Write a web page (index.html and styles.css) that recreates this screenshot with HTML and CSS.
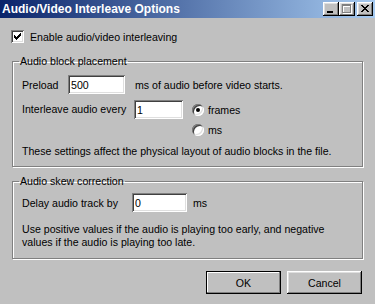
FILE: index.html
```html
<!DOCTYPE html>
<html lang="en">
<head>
    <meta charset="UTF-8">
    <title>Audio/Video Interleave Options</title>
    <link rel="stylesheet" href="styles.css">
</head>
<body>
    <div class="dialog">
        <div class="titlebar">
            <span class="title">Audio/Video Interleave Options</span>
            <div class="caption-buttons">
                <span class="cap-btn">
                    <svg width="16" height="14" viewBox="0 0 16 14" shape-rendering="crispEdges"><rect x="4" y="9" width="6" height="2" fill="#000"/></svg>
                </span>
                <span class="cap-btn">
                    <svg width="16" height="14" viewBox="0 0 16 14" shape-rendering="crispEdges">
                        <path d="M4 3h9v9H4z M5 5h7v6H5z" fill="#fff" fill-rule="evenodd"/>
                        <path d="M3 2h9v9H3z M4 4h7v6H4z" fill="#808080" fill-rule="evenodd"/>
                    </svg>
                </span>
                <span class="cap-btn cap-close">
                    <svg width="16" height="14" viewBox="0 0 16 14" shape-rendering="crispEdges">
                        <path transform="translate(4 3)" d="M0 0h2v1H0z M6 0h2v1H6z M1 1h2v1H1z M5 1h2v1H5z M2 2h4v1H2z M3 3h2v1H3z M2 4h4v1H2z M1 5h2v1H1z M5 5h2v1H5z M0 6h2v1H0z M6 6h2v1H6z" fill="#000"/>
                    </svg>
                </span>
            </div>
        </div>

        <div class="client">
            <label class="check-row">
                <span class="checkbox">
                    <svg width="7" height="7" viewBox="0 0 7 7" shape-rendering="crispEdges"><path d="M6 0h1v1H6z M5 1h2v1H5z M0 2h1v1H0z M4 2h3v1H4z M0 3h2v1H0z M3 3h3v1H3z M0 4h5v1H0z M1 5h3v1H1z M2 6h1v1H2z" fill="#000"/></svg>
                </span>
                Enable audio/video interleaving
            </label>

            <!-- 오디오 블록 배치 -->
            <fieldset class="group group-placement">
                <legend>Audio block placement</legend>
                <div class="row">
                    <span class="label label-preload">Preload</span>
                    <input class="edit edit-preload" type="text" value="500">
                    <span class="after-edit">ms of audio before video starts.</span>
                </div>
                <div class="row row-interleave">
                    <span class="label label-interleave">Interleave audio every</span>
                    <input class="edit edit-interleave" type="text" value="1">
                    <div class="radios">
                        <label class="radio-row"><span class="radio"><span class="dot"></span></span>frames</label>
                        <label class="radio-row"><span class="radio"></span>ms</label>
                    </div>
                </div>
                <p class="note">These settings affect the physical layout of audio blocks in the file.</p>
            </fieldset>

            <!-- 오디오 스큐 보정 -->
            <fieldset class="group group-skew">
                <legend>Audio skew correction</legend>
                <div class="row">
                    <span class="label label-delay">Delay audio track by</span>
                    <input class="edit edit-delay" type="text" value="0">
                    <span class="after-delay">ms</span>
                </div>
                <p class="note note-skew">Use positive values if the audio is playing too early, and negative values if the audio is playing too late.</p>
            </fieldset>

            <div class="button-row">
                <button class="push-button default">OK</button>
                <button class="push-button">Cancel</button>
            </div>
        </div>
    </div>
</body>
</html>
```

FILE: styles.css
```css
/* 기본 */
body {
    margin: 0;
    background-color: #C0C0C0;
    font-family: "Liberation Sans", Arial, sans-serif;
    font-size: 10.6px;
    color: #000;
}
.dialog {
    width: 375px;
    height: 304px;
    overflow: hidden;
}
/* 타이틀 바 */
.titlebar {
    height: 18px;
    display: flex;
    align-items: center;
    justify-content: space-between;
    padding: 0 2px;
    background: linear-gradient(to right, #0A246A, #A6CAF0);
}
.title {
    color: #fff;
    font-weight: bold;
    font-size: 12px;
}
.caption-buttons {
    display: flex;
}
.cap-btn {
    width: 16px;
    height: 14px;
    background-color: #C0C0C0;
    box-shadow: inset -1px -1px #000, inset 1px 1px #fff, inset -2px -2px #808080, inset 2px 2px #DFDFDF;
}
.cap-btn svg {
    display: block;
}
.cap-close {
    margin-left: 2px;
}
/* 본문 */
.client {
    padding: 12px 12px 0 12px;
}
.check-row {
    display: flex;
    align-items: center;
    gap: 6px;
    height: 13px;
    margin-left: -1px;
}
.checkbox {
    width: 13px;
    height: 13px;
    box-sizing: border-box;
    display: flex;
    align-items: center;
    justify-content: center;
    background-color: #fff;
    box-shadow: inset 1px 1px #808080, inset -1px -1px #fff, inset 2px 2px #404040, inset -2px -2px #DFDFDF;
}
.checkbox svg {
    display: block;
}
/* 그룹 박스 */
.group {
    margin: 12px 0 0 0;
    padding: 0 9px;
    border: 1px solid #808080;
    box-shadow: inset 1px 1px #fff, 1px 1px #fff;
    min-width: 0;
}
.group legend {
    margin-left: -3px;
    padding: 0 1px;
    line-height: 13px;
}
.group-placement {
    padding-top: 7px;
    padding-bottom: 8px;
}
.group-skew {
    margin-top: 8px;
    padding-top: 5px;
    padding-bottom: 9px;
}
.row {
    display: flex;
    align-items: center;
    height: 19px;
}
.row-interleave {
    align-items: flex-start;
    height: auto;
    margin-top: 6px;
}
.row-interleave .label {
    line-height: 19px;
}
.label-preload {
    width: 46px;
}
.label-interleave {
    width: 112px;
}
.label-delay {
    width: 110px;
}
.edit {
    box-sizing: border-box;
    height: 19px;
    margin: 0;
    padding: 0 3px;
    border: none;
    background-color: #fff;
    font: inherit;
    color: #000;
    box-shadow: inset 1px 1px #808080, inset -1px -1px #fff, inset 2px 2px #404040, inset -2px -2px #DFDFDF;
    outline: none;
}
.edit-preload {
    width: 57px;
}
.edit-interleave {
    width: 49px;
}
.edit-delay {
    width: 55px;
}
.after-edit {
    margin-left: 10px;
}
.after-delay {
    margin-left: 6px;
}
.radios {
    display: flex;
    flex-direction: column;
    gap: 1px;
    margin-left: 9px;
}
.radio-row {
    display: flex;
    align-items: center;
    gap: 4px;
    height: 19px;
}
.radio {
    width: 12px;
    height: 12px;
    border-radius: 50%;
    display: flex;
    align-items: center;
    justify-content: center;
    background-color: #fff;
    box-shadow: inset 1px 1px #808080, inset -1px -1px #fff, inset 2px 2px #404040, inset -2px -2px #DFDFDF;
}
.dot {
    width: 4px;
    height: 4px;
    border-radius: 50%;
    background-color: #000;
}
.note {
    margin: 6px 0 0 0;
    line-height: 13px;
}
.note-skew {
    margin-top: 11px;
}
/* 버튼 */
.button-row {
    display: flex;
    justify-content: flex-end;
    gap: 6px;
    margin-top: 12px;
    padding-right: 1px;
}
.push-button {
    width: 75px;
    height: 23px;
    padding: 0;
    border: none;
    background-color: #C0C0C0;
    font: inherit;
    color: #000;
    box-shadow: inset -1px -1px #000, inset 1px 1px #fff, inset -2px -2px #808080, inset 2px 2px #DFDFDF;
}
.push-button.default {
    box-shadow: inset 0 0 0 1px #000, inset -2px -2px #808080, inset 2px 2px #fff;
}
```
